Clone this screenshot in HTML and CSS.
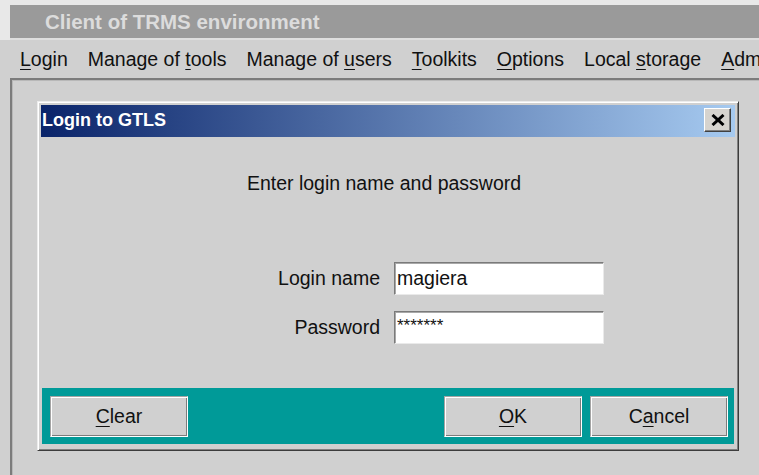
FILE: index.html
```html
<!DOCTYPE html>
<html lang="en">
<head>
<meta charset="utf-8">
<title>Client of TRMS environment</title>
<link rel="stylesheet" href="styles.css">
</head>
<body>
<div class="app">
  <header class="frame-top">
    <div class="caption">Client of TRMS environment</div>
  </header>
  <nav class="menubar">
    <span class="menu-item"><u>L</u>ogin</span>
    <span class="menu-item">Manage of <u>t</u>ools</span>
    <span class="menu-item">Manage of <u>u</u>sers</span>
    <span class="menu-item"><u>T</u>oolkits</span>
    <span class="menu-item"><u>O</u>ptions</span>
    <span class="menu-item">Local <u>s</u>torage</span>
    <span class="menu-item"><u>A</u>dministration</span>
  </nav>
  <main class="workspace">
    <section class="dialog">
      <div class="dlg-title">
        <span class="dlg-caption">Login to GTLS</span>
        <button class="close-btn" type="button" aria-label="Close">
          <svg width="14" height="12" viewBox="0 0 14 12">
            <path d="M1.5 1 L12.5 11 M12.5 1 L1.5 11" stroke="#000" stroke-width="3" fill="none"/>
          </svg>
        </button>
      </div>
      <div class="dlg-body">
        <p class="prompt">Enter login name and password</p>
        <div class="form">
          <label class="label" for="login">Login name</label>
          <input class="field" id="login" type="text" value="magiera" readonly>
          <label class="label" for="pass">Password</label>
          <input class="field field-pass" id="pass" type="text" value="*******" readonly>
        </div>
        <div class="actions">
          <button class="btn" type="button"><u>C</u>lear</button>
          <button class="btn btn-push" type="button"><u>O</u>K</button>
          <button class="btn" type="button">C<u>a</u>ncel</button>
        </div>
      </div>
    </section>
  </main>
</div>
</body>
</html>
```
FILE: styles.css
```css
* {
  box-sizing: border-box;
}

html, body {
  margin: 0;
  padding: 0;
}

body {
  background: #d0d0d0;
  font-family: "Liberation Sans", Arial, sans-serif;
  color: #111;
}

.app {
  width: 759px;
  height: 475px;
  overflow: hidden;
  display: flex;
  flex-direction: column;
  background: #d0d0d0;
}

/* outer window frame and its inactive caption */
.frame-top {
  background: #e8e8e8;
  padding: 5px 0 0 10px;
}

.caption {
  height: 35px;
  background: #9a9a9a;
  border-bottom: 2px solid #dedede;
  padding-left: 35px;
  font-weight: bold;
  font-size: 20.5px;
  line-height: 33px;
  color: #dcdcdc;
  white-space: nowrap;
}

/* menu bar */
.menubar {
  height: 38px;
  display: flex;
  align-items: center;
  gap: 20px;
  padding-left: 20px;
  font-size: 19.5px;
  white-space: nowrap;
  overflow: hidden;
  color: #111;
}

.menu-item u,
.btn u {
  text-underline-offset: 3px;
}

/* sunken desktop area holding the internal frames */
.workspace {
  flex: 1;
  margin-left: 10px;
  border-top: 2px solid #7c7c7c;
  border-left: 2px solid #7c7c7c;
  box-shadow: inset 1px 1px #b8b8b8;
  padding: 21px 0 0 25px;
}

/* internal dialog frame */
.dialog {
  width: 702px;
  height: 350px;
  display: flex;
  flex-direction: column;
  background: #d0d0d0;
  border: 1px solid;
  border-color: #ececec #3c3c3c #3c3c3c #ececec;
  box-shadow: inset 1px 1px #ffffff, inset -1px -1px #808080;
  padding: 3px;
}

.dlg-title {
  height: 32px;
  flex: none;
  display: flex;
  align-items: center;
  justify-content: space-between;
  padding: 0 4px 2px 1px;
  background: linear-gradient(to right, #0a246a, #a6caf0);
}

.dlg-caption {
  font-weight: bold;
  font-size: 18px;
  color: #ffffff;
  white-space: nowrap;
}

.close-btn {
  width: 27px;
  height: 24px;
  padding: 0;
  display: flex;
  align-items: center;
  justify-content: center;
  background: #d6d3ce;
  border: 1px solid;
  border-color: #ffffff #404040 #404040 #ffffff;
  box-shadow: inset -1px -1px #808080;
}

.dlg-body {
  flex: 1;
  display: flex;
  flex-direction: column;
}

.prompt {
  margin: 35px 0 0;
  font-size: 19.5px;
  line-height: 22px;
  text-align: center;
  padding-right: 8px;
}

.form {
  margin-top: 68px;
  display: grid;
  grid-template-columns: 339px 210px;
  column-gap: 14px;
  row-gap: 16px;
  align-items: center;
}

.label {
  font-size: 19.5px;
  text-align: right;
}

.field {
  height: 33px;
  width: 210px;
  margin: 0;
  padding: 0 0 0 2px;
  background: #ffffff;
  border: 1px solid;
  border-color: #7a7a7a #eaeaea #eaeaea #7a7a7a;
  box-shadow: inset 1px 1px #a8a8a8;
  font-family: "Liberation Sans", Arial, sans-serif;
  font-size: 19.5px;
  color: #111;
  outline: none;
}

.field-pass {
  font-size: 17px;
  padding-bottom: 3px;
}

/* teal strip with command buttons */
.actions {
  margin: auto 1px 3px;
  height: 56px;
  display: flex;
  gap: 8px;
  padding: 8px 6px 7px 8px;
  background: #009a98;
}

.btn {
  width: 138px;
  height: 41px;
  margin: 0;
  padding: 0;
  background: #d0d0d0;
  border: 1px solid;
  border-color: #a4a4a4 #ffffff #ffffff #a4a4a4;
  box-shadow: inset 1px 1px #ffffff, inset -1px -1px #7c7c7c;
  font-family: "Liberation Sans", Arial, sans-serif;
  font-size: 19.5px;
  color: #111;
}

.btn-push {
  margin-left: auto;
}
```
